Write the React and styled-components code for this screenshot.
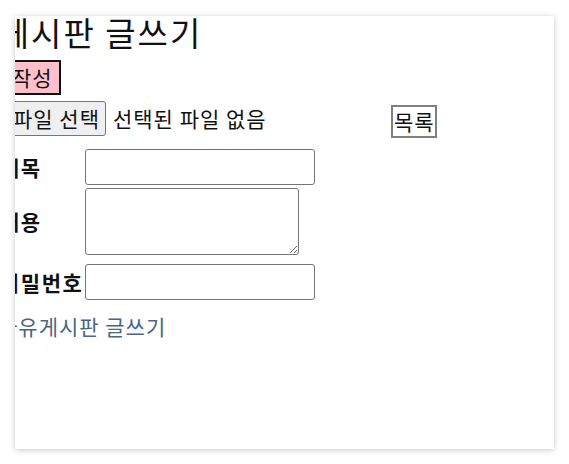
import React from "react";
import styled, { createGlobalStyle } from "styled-components";

const Global = createGlobalStyle`
  html, body { margin: 0; padding: 0; background: #fff; }
  body { font-family: "Noto Sans CJK KR", "Noto Sans", sans-serif; color: #111; }
`;

const Card = styled.div`
  margin: 16px 15px;
  width: 539px;
  height: 433px;
  background: #fff;
  box-shadow: 0 1px 6px rgba(0, 0, 0, 0.22);
  overflow: hidden;
`;

const Content = styled.div`
  margin-left: -17px;
  display: flex;
  flex-direction: column;
  align-items: flex-start;
`;

const Title = styled.h1`
  margin: 0 0 0 -64px;
  font-size: 33px;
  letter-spacing: 2px;
  font-weight: 400;
  line-height: 32px;
  white-space: nowrap;
`;

const Button = styled.button`
  font-family: inherit;
  font-size: 21px;
  letter-spacing: 1px;
  line-height: 29px;
  color: #111;
  cursor: pointer;
  background: ${(p) => (p.$variant === "pink" ? "pink" : p.$variant === "file" ? "#efefef" : "#fff")};
  border: ${(p) =>
    p.$variant === "pink" ? "2px solid #111" : p.$variant === "file" ? "1px solid #767676" : "2px solid #808080"};
  border-radius: ${(p) => (p.$variant === "file" ? "3px" : "0")};
  padding: ${(p) => (p.$variant === "pink" ? "1px 6px 1px 7px" : p.$variant === "file" ? "2px 5px 2px 6px" : "0 0 0 1px")};
  white-space: nowrap;
`;

const SubmitButton = styled(Button)`
  margin: 12px 0 0 5px;
`;

const FileRow = styled.div`
  display: flex;
  align-items: flex-start;
  margin: 6px 0 0 8px;
`;

const FileName = styled.span`
  font-size: 21px;
  letter-spacing: 1px;
  line-height: 29px;
  margin: 3px 0 0 7px;
  width: 278px;
  white-space: nowrap;
`;

const ListButton = styled(Button)`
  margin-top: 4px;
`;

const Form = styled.div`
  display: grid;
  grid-template-columns: max-content max-content;
  column-gap: 2px;
  align-items: center;
  margin-top: 11px;
  padding-left: 2px;
`;

const Label = styled.label`
  font-size: 21px;
  letter-spacing: 1.5px;
  font-weight: 700;
  line-height: 29px;
  white-space: nowrap;
  margin: ${(p) => p.$gap || "0"};
`;

const Field = styled.input`
  box-sizing: border-box;
  width: 230px;
  height: 36px;
  border: 1px solid #767676;
  border-radius: 3px;
  font-size: 16px;
  margin: 0;
`;

const Area = styled.textarea`
  box-sizing: border-box;
  width: 214px;
  height: 67px;
  border: 1px solid #767676;
  border-radius: 3px;
  font-size: 16px;
  margin: 3px 0 9px;
  display: block;
`;

const BackLink = styled.a`
  font-size: 21px;
  letter-spacing: 1px;
  line-height: 29px;
  color: #4a6682;
  text-decoration: none;
  margin-top: 12px;
  white-space: nowrap;
`;

export default function App() {
  return (
    <>
      <Global />
      <Card>
        <Content>
          <Title>자유게시판 글쓰기</Title>
          <SubmitButton $variant="pink">작성</SubmitButton>
          <FileRow>
            <Button $variant="file">파일 선택</Button>
            <FileName>선택된 파일 없음</FileName>
            <ListButton $variant="plain">목록</ListButton>
          </FileRow>
          <Form>
            <Label>제목</Label>
            <Field type="text" />
            <Label $gap="3px 0 9px">내용</Label>
            <Area />
            <Label>비밀번호</Label>
            <Field type="password" />
          </Form>
          <BackLink href="#">자유게시판 글쓰기</BackLink>
        </Content>
      </Card>
    </>
  );
}
